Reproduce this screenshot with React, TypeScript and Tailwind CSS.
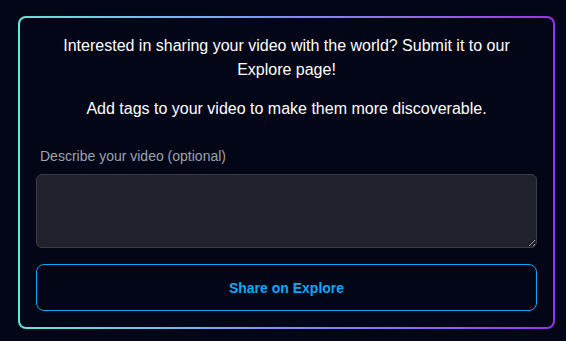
export default function App() {
  return (
    <div
      className="min-h-screen bg-[#020617] pl-[18px] pr-[11px] pt-4 pb-3"
      style={{ fontFamily: '"Liberation Sans", Arial, sans-serif' }}
    >
      {/* Gradient border card */}
      <div className="rounded-lg bg-gradient-to-r from-[#5eead4] via-[#818cf8] to-[#9333ea] p-[2px]">
        <div className="rounded-md bg-[#020617] p-4">
          <p className="text-center text-base leading-6 text-white">
            Interested in sharing your video with the world? Submit it to our Explore page!
          </p>
          <p className="mt-[15px] text-center text-base leading-6 text-white">
            Add tags to your video to make them more discoverable.
          </p>

          <label
            htmlFor="explore-desc"
            className="mt-[25px] block pl-1 text-sm leading-5 text-[#9ca3af]"
          >
            Describe your video (optional)
          </label>
          <textarea
            id="explore-desc"
            className="mt-2 block h-[74px] w-full rounded-md border border-[#3a3f47] bg-[#1f2329] px-3 py-2 text-sm text-white focus:outline-none"
          />

          <button
            type="button"
            className="mt-4 block h-[47px] w-full rounded-lg border border-[#08a8f5] text-sm font-bold text-[#08aaf8]"
          >
            Share on Explore
          </button>
        </div>
      </div>
    </div>
  );
}
